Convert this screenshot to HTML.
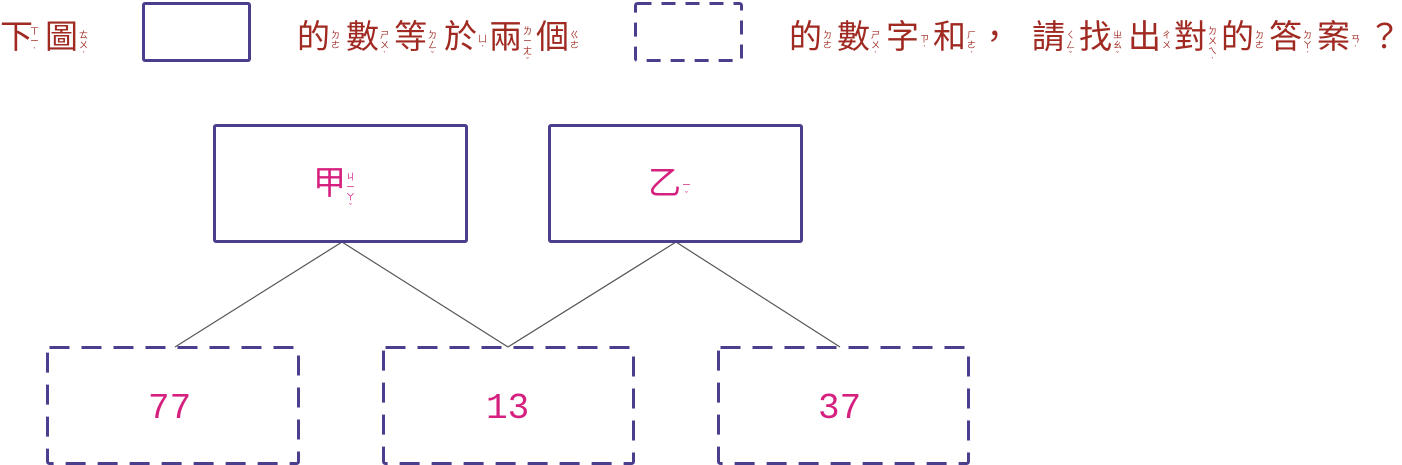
<!DOCTYPE html><html><head><meta charset="utf-8"><style>
body{margin:0;width:1402px;height:465px;background:#fff;position:relative;overflow:hidden;font-family:"Liberation Sans","Noto Sans CJK TC",sans-serif}
.c{position:absolute;top:17px;font-size:33px;line-height:40px;color:#a02a22}
.b{position:absolute;font-size:9px;line-height:10px;color:#a02a22;width:9px;text-align:center}
.box{position:absolute;border:3px solid #4a3f8c;border-radius:3px;box-sizing:border-box}
.n{position:absolute;font-size:36px;color:#d6207f;font-family:"Liberation Mono",monospace}
</style></head><body>
<svg style="position:absolute;left:0;top:0" width="1402" height="465"><g stroke="#555" stroke-width="1.2" fill="none">
<line x1="342" y1="242" x2="175" y2="347"/><line x1="342" y1="242" x2="508" y2="347"/><line x1="676" y1="242" x2="508" y2="347"/><line x1="676" y1="242" x2="840" y2="347"/></g>
<g stroke="#4a3f8c" stroke-width="3" fill="#fff" stroke-dasharray="20 12">
<rect x="635.5" y="3.5" width="106" height="57" rx="2" stroke-dasharray="14 10"/>
<rect x="47.5" y="347.5" width="251" height="116" rx="2"/>
<rect x="383.5" y="347.5" width="250" height="116" rx="2"/>
<rect x="718.5" y="347.5" width="250" height="116" rx="2"/>
</g></svg>
<div class="c" style="left:0">下</div><div class="b" style="left:30px;top:26px">ㄒ<br>ㄧ<br>ˋ</div>
<div class="c" style="left:45px">圖</div><div class="b" style="left:79px;top:30px">ㄊ<br>ㄨˊ</div>
<div class="box" style="left:142px;top:2px;width:109px;height:60px"></div>
<div class="c" style="left:297px">的</div><div class="b" style="left:331px;top:30px">ㄉ<br>ㄜ</div>
<div class="c" style="left:346px">數</div><div class="b" style="left:380px;top:30px">ㄕ<br>ㄨˋ</div>
<div class="c" style="left:394px">等</div><div class="b" style="left:428px;top:30px">ㄉ<br>ㄥˇ</div>
<div class="c" style="left:444px">於</div><div class="b" style="left:478px;top:34px">ㄩˊ</div>
<div class="c" style="left:489px">兩</div><div class="b" style="left:523px;top:26px">ㄌ<br>ㄧ<br>ㄤˇ</div>
<div class="c" style="left:536px">個</div><div class="b" style="left:570px;top:30px">ㄍ<br>ㄜ</div>
<div class="c" style="left:789px">的</div><div class="b" style="left:823px;top:30px">ㄉ<br>ㄜ</div>
<div class="c" style="left:837px">數</div><div class="b" style="left:871px;top:30px">ㄕ<br>ㄨˋ</div>
<div class="c" style="left:886px">字</div><div class="b" style="left:920px;top:34px">ㄗˋ</div>
<div class="c" style="left:933px">和</div><div class="b" style="left:967px;top:30px">ㄏ<br>ㄜˊ</div>
<div class="c" style="left:978px">，</div>
<div class="c" style="left:1032px">請</div><div class="b" style="left:1066px;top:30px">ㄑ<br>ㄥˇ</div>
<div class="c" style="left:1079px">找</div><div class="b" style="left:1113px;top:30px">ㄓ<br>ㄠˇ</div>
<div class="c" style="left:1128px">出</div><div class="b" style="left:1162px;top:30px">ㄔ<br>ㄨ</div>
<div class="c" style="left:1174px">對</div><div class="b" style="left:1208px;top:26px">ㄉ<br>ㄨ<br>ㄟˋ</div>
<div class="c" style="left:1221px">的</div><div class="b" style="left:1255px;top:30px">ㄉ<br>ㄜ</div>
<div class="c" style="left:1269px">答</div><div class="b" style="left:1303px;top:30px">ㄉ<br>ㄚˊ</div>
<div class="c" style="left:1317px">案</div><div class="b" style="left:1351px;top:34px">ㄢˋ</div>
<div class="c" style="left:1368px">？</div>
<div class="box" style="left:213px;top:124px;width:255px;height:119px"></div>
<div class="box" style="left:548px;top:124px;width:255px;height:119px"></div>
<div class="c" style="left:313px;top:163px;color:#d6207f">甲</div><div class="b" style="left:346px;top:172px;color:#d6207f">ㄐ<br>ㄧ<br>ㄚˇ</div>
<div class="c" style="left:648px;top:163px;color:#d6207f">乙</div><div class="b" style="left:682px;top:180px;color:#d6207f">ㄧˇ</div>
<div class="n" style="left:148px;top:388px">77</div>
<div class="n" style="left:486px;top:388px">13</div>
<div class="n" style="left:818px;top:388px">37</div>
</body></html>
